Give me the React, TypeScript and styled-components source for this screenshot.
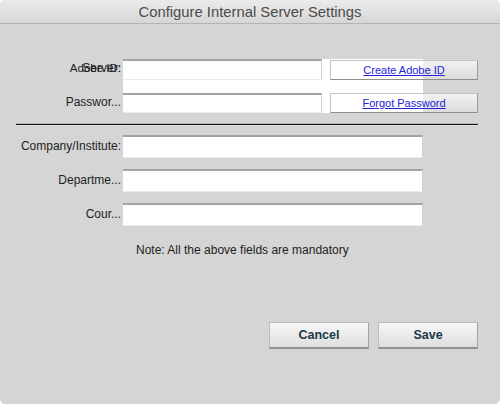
import React from "react";
import styled, { createGlobalStyle } from "styled-components";

const Global = createGlobalStyle`
  html, body { margin: 0; padding: 0; background: #ffffff; }
  body { font-family: "Liberation Sans", Arial, sans-serif; }
`;

const Window = styled.div`
  width: 500px;
  height: 404px;
  background: #d5d5d5;
  border-radius: 5px;
  overflow: hidden;
  display: flex;
  flex-direction: column;
  box-sizing: border-box;
`;

const TitleBar = styled.div`
  height: 23px;
  flex: 0 0 auto;
  border-bottom: 1px solid #b3b3b3;
  background: linear-gradient(#ebebeb, #d6d6d6);
  display: flex;
  align-items: center;
  justify-content: center;
  font-size: 14.8px;
  color: #4b4b4b;
`;

const TopGrid = styled.div`
  margin-top: 35px;
  display: grid;
  grid-template-columns: 121px 2px 199px 8px 93px 55px;
  grid-template-rows: 21px 13px 20px;
`;

const Backdrop = styled.div`
  grid-column: 3 / 6;
  grid-row: 1 / 4;
  background: #ffffff;
`;

const LabelCell = styled.div<{ $row: number }>`
  grid-column: 1;
  grid-row: ${(p) => p.$row};
  display: grid;
  justify-items: end;
  align-items: center;
  padding-bottom: 3px;
`;

const Label = styled.span<{ $size?: number }>`
  grid-area: 1 / 1;
  font-size: ${(p) => p.$size ?? 12}px;
  color: #1e1e1e;
  white-space: nowrap;
`;

const Field = styled.div<{ $row?: number }>`
  grid-column: 3;
  grid-row: ${(p) => p.$row ?? 1};
  background: #ffffff;
  box-sizing: border-box;
  border-top: 2px solid #a3a3a3;
  border-right: 1px solid #cfcfcf;
  border-bottom: 1px solid #ececec;
  position: relative;
  z-index: 1;
`;

const LinkButton = styled.button<{ $row: number }>`
  grid-column: 5 / 7;
  grid-row: ${(p) => p.$row};
  align-self: start;
  height: 20px;
  margin: ${(p) => (p.$row === 1 ? "1px 0 0" : "0")};
  padding: 0;
  box-sizing: border-box;
  border: 1px solid #c4c4c4;
  border-bottom: 1px solid #8c8c8c;
  border-right: 1px solid #9c9c9c;
  background:
    linear-gradient(to right, #ffffff 92px, transparent 92px),
    linear-gradient(#f2f2f2, #dcdcdc);
  font-family: "Liberation Sans", Arial, sans-serif;
  font-size: 11px;
  color: #2323d9;
  text-decoration: underline;
  position: relative;
  z-index: 1;
  cursor: pointer;
`;

const Separator = styled.div`
  margin: 11px 22px 0 16px;
  height: 1px;
  background: #111;
  box-shadow: 0 -1px 0 #b8b8b8, 0 1px 0 #e2e2e2;
`;

const FormGrid = styled.div`
  margin-top: 10px;
  display: grid;
  grid-template-columns: 121px 300px;
  column-gap: 2px;
  row-gap: 11px;
  grid-auto-rows: 23px;
`;

const FormLabel = styled.div`
  display: flex;
  justify-content: flex-end;
  align-items: center;
  font-size: 12px;
  color: #1e1e1e;
  white-space: nowrap;
  padding-bottom: 2px;
`;

const FormField = styled.div`
  background: #ffffff;
  box-sizing: border-box;
  border-top: 2px solid #a3a3a3;
  border-right: 1px solid #cfcfcf;
  border-bottom: 1px solid #ececec;
`;

const Note = styled.div`
  margin-top: 17px;
  padding-left: 136px;
  font-size: 12px;
  line-height: 15px;
  color: #1e1e1e;
`;

const Footer = styled.div`
  margin-top: auto;
  margin-bottom: 55px;
  display: flex;
  justify-content: flex-end;
  gap: 9px;
  padding-right: 22px;
`;

const ActionButton = styled.button`
  width: 100px;
  height: 27px;
  box-sizing: border-box;
  border: 1px solid #bdbdbd;
  border-bottom: 2px solid #8f8f8f;
  border-right: 1px solid #a2a2a2;
  background: linear-gradient(#f7f7f7, #dedede);
  font-family: "Liberation Sans", Arial, sans-serif;
  font-weight: bold;
  font-size: 12.5px;
  color: #1b3a47;
  cursor: pointer;
`;

export default function App() {
  return (
    <>
      <Global />
      <Window>
        <TitleBar>Configure Internal Server Settings</TitleBar>
        <TopGrid>
          <Backdrop />
          <LabelCell $row={1}>
            <Label $size={11.5}>Adobe ID:</Label>
            <Label>Server:</Label>
          </LabelCell>
          <Field $row={1} />
          <LinkButton $row={1}>Create Adobe ID</LinkButton>
          <LabelCell $row={3}>
            <Label>Passwor...</Label>
          </LabelCell>
          <Field $row={3} />
          <LinkButton $row={3}>Forgot Password</LinkButton>
        </TopGrid>
        <Separator />
        <FormGrid>
          <FormLabel>Company/Institute:</FormLabel>
          <FormField />
          <FormLabel>Departme...</FormLabel>
          <FormField />
          <FormLabel>Cour...</FormLabel>
          <FormField />
        </FormGrid>
        <Note>Note: All the above fields are mandatory</Note>
        <Footer>
          <ActionButton>Cancel</ActionButton>
          <ActionButton>Save</ActionButton>
        </Footer>
      </Window>
    </>
  );
}
